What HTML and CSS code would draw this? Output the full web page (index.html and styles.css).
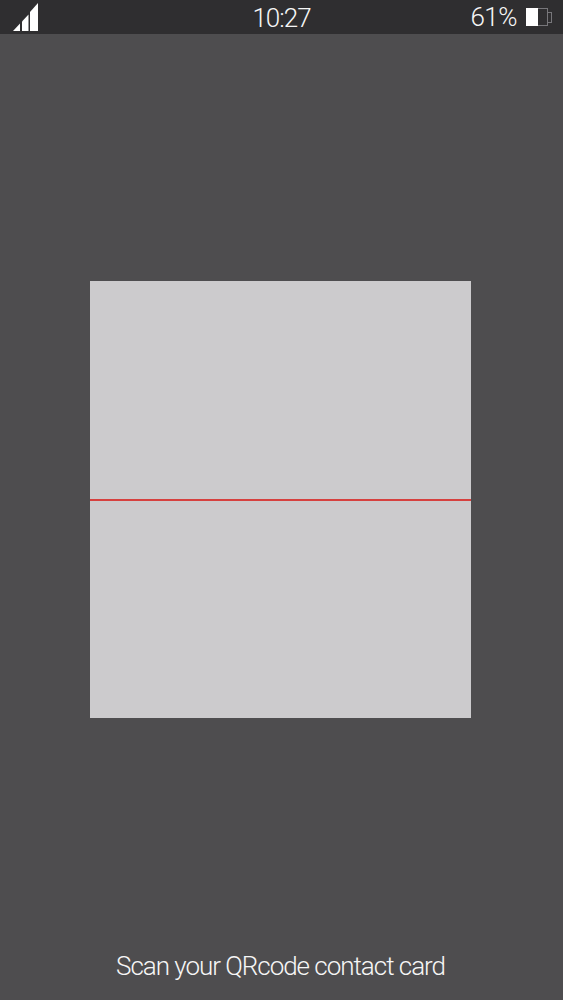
FILE: index.html
```html
<!DOCTYPE html>
<html lang="en">
	<head>
		<meta charset="UTF-8" />
		<title>Scan QRcode</title>
		<link rel="stylesheet" href="styles.css">
	</head>
	<body>
		<div class="status-bar">
			<svg class="signal" width="25" height="32" viewBox="0 0 25 32">
				<path d="M0 31 L7 23.5 V31 Z" fill="#fff" />
				<path d="M9 31 V21.5 L15.5 14.5 V31 Z" fill="#fff" />
				<path d="M17 31 V12 L25 3 V31 Z" fill="#fff" />
			</svg>
			<div class="time">10:27</div>
			<div class="battery-box">
				<span class="percent">61%</span>
				<div class="battery">
					<div class="battery-level"></div>
				</div>
				<div class="battery-tip"></div>
			</div>
		</div>

		<div class="scan-area">
			<div class="scan-box">
				<div class="scan-line"></div>
			</div>
			<div class="caption">Scan your QRcode contact card</div>
		</div>
	</body>
</html>
```

FILE: styles.css
```css
html,
body {
	margin: 0;
	height: 100%;
}

body {
	display: flex;
	flex-direction: column;
	background-color: #4e4d4f;
	color: #f6f6f6;
	font-family: Roboto, "Liberation Sans", Arial, sans-serif;
	font-weight: 300;
}

.status-bar {
	position: relative;
	display: flex;
	align-items: center;
	justify-content: space-between;
	height: 34px;
	padding: 0 11px 0 13px;
	background-color: #2f2e30;
}

.signal {
	align-self: flex-start;
}

.time {
	position: absolute;
	left: 0;
	right: 0;
	top: 4px;
	text-align: center;
	font-size: 26px;
	line-height: 29px;
	letter-spacing: -1px;
}

.battery-box {
	display: flex;
	align-items: center;
}

.percent {
	font-size: 26px;
	line-height: 34px;
	letter-spacing: -0.5px;
	margin-right: 9px;
}

.battery {
	width: 22px;
	height: 18px;
	border: 1px solid #77767a;
	box-sizing: border-box;
}

.battery-level {
	width: 12px;
	height: 18px;
	margin: -1px 0 0 -1px;
	background-color: #fff;
}

.battery-tip {
	width: 3px;
	height: 9px;
	border: 1px solid #77767a;
	border-left: none;
}

.scan-area {
	flex: 1;
	display: flex;
	flex-direction: column;
	align-items: center;
}

.scan-box {
	display: flex;
	align-items: flex-start;
	box-sizing: border-box;
	width: 381px;
	height: 437px;
	margin: 247px 2px 0 0;
	padding-top: 218px;
	background-color: #cccbcd;
}

.scan-line {
	width: 100%;
	height: 2px;
	background-color: #d6413f;
}

.caption {
	margin: 233px 2px 0 0;
	font-size: 26px;
	line-height: 30px;
	letter-spacing: -1.03px;
}
```
